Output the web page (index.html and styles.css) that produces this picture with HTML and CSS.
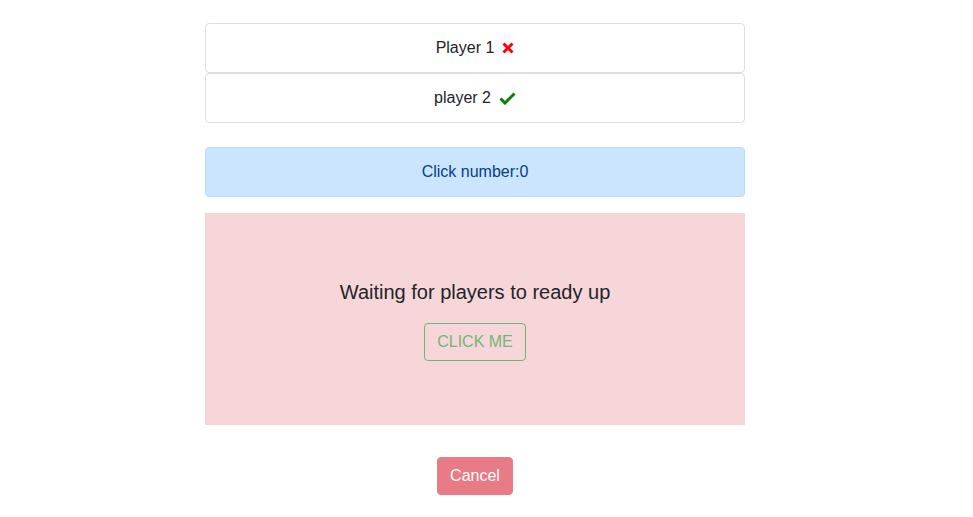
FILE: index.html
```html
<!DOCTYPE html>
<html>
<head>
<meta charset="utf-8">
<link rel="stylesheet" href="styles.css">
</head>
<body>
<div class="container">
  <ul class="list-group">
    <li class="list-item">Player 1
      <svg class="icon" width="12" height="12" viewBox="0 0 12 12"><path d="M1.5 1.5 L10.5 10.5 M10.5 1.5 L1.5 10.5" stroke="#f00" stroke-width="3" stroke-linecap="butt"/></svg>
    </li>
    <li class="list-item">player 2
      <svg class="icon check" width="17" height="13" viewBox="0 0 17 13"><path d="M1.5 6.5 L6 11 L15.5 1.5" stroke="#0a8000" stroke-width="3" fill="none" stroke-linejoin="miter"/></svg>
    </li>
  </ul>
  <div class="alert-info">Click number:0</div>
  <div class="game-box">
    <h5 class="status">Waiting for players to ready up</h5>
    <button class="btn btn-outline">CLICK ME</button>
  </div>
  <div class="actions">
    <button class="btn btn-cancel">Cancel</button>
  </div>
</div>
</body>
</html>
```

FILE: styles.css
```css
* { box-sizing: border-box; }
body {
  margin: 0;
  padding-right: 23px;
  font-family: "Liberation Sans", Arial, sans-serif;
  font-size: 16px;
  line-height: 1.5;
  color: #212529;
  background: #fff;
}
.container {
  width: 540px;
  margin: 23px auto 0;
}
.list-group {
  list-style: none;
  margin: 0 0 24px;
  padding: 0;
}
.list-item {
  border: 1px solid rgba(0,0,0,.125);
  border-radius: 4px;
  padding: 12px 20px;
  display: flex;
  justify-content: center;
  align-items: center;
  gap: 8px;
  height: 50px;
}
.icon { display: block; }
.alert-info {
  background: #cce5ff;
  border: 1px solid #b8daff;
  color: #004085;
  border-radius: 4px;
  padding: 12px 20px;
  text-align: center;
  margin-bottom: 16px;
  height: 50px;
}
.game-box {
  background: #f6d6d9;
  height: 212px;
  padding-top: 67px;
  display: flex;
  flex-direction: column;
  align-items: center;
}
.status {
  margin: 0 0 19px;
  font-size: 20px;
  font-weight: 400;
  line-height: 24px;
}
.btn {
  font-family: inherit;
  font-size: 16px;
  line-height: 24px;
  padding: 6px 12px;
  border-radius: 4px;
  cursor: pointer;
}
.btn-outline {
  background: transparent;
  color: #28a745;
  border: 1px solid #28a745;
  opacity: .65;
}
.actions {
  display: flex;
  justify-content: center;
  margin-top: 32px;
}
.btn-cancel {
  background: #dc3545;
  border: 1px solid #dc3545;
  color: #fff;
  opacity: .65;
}
```
